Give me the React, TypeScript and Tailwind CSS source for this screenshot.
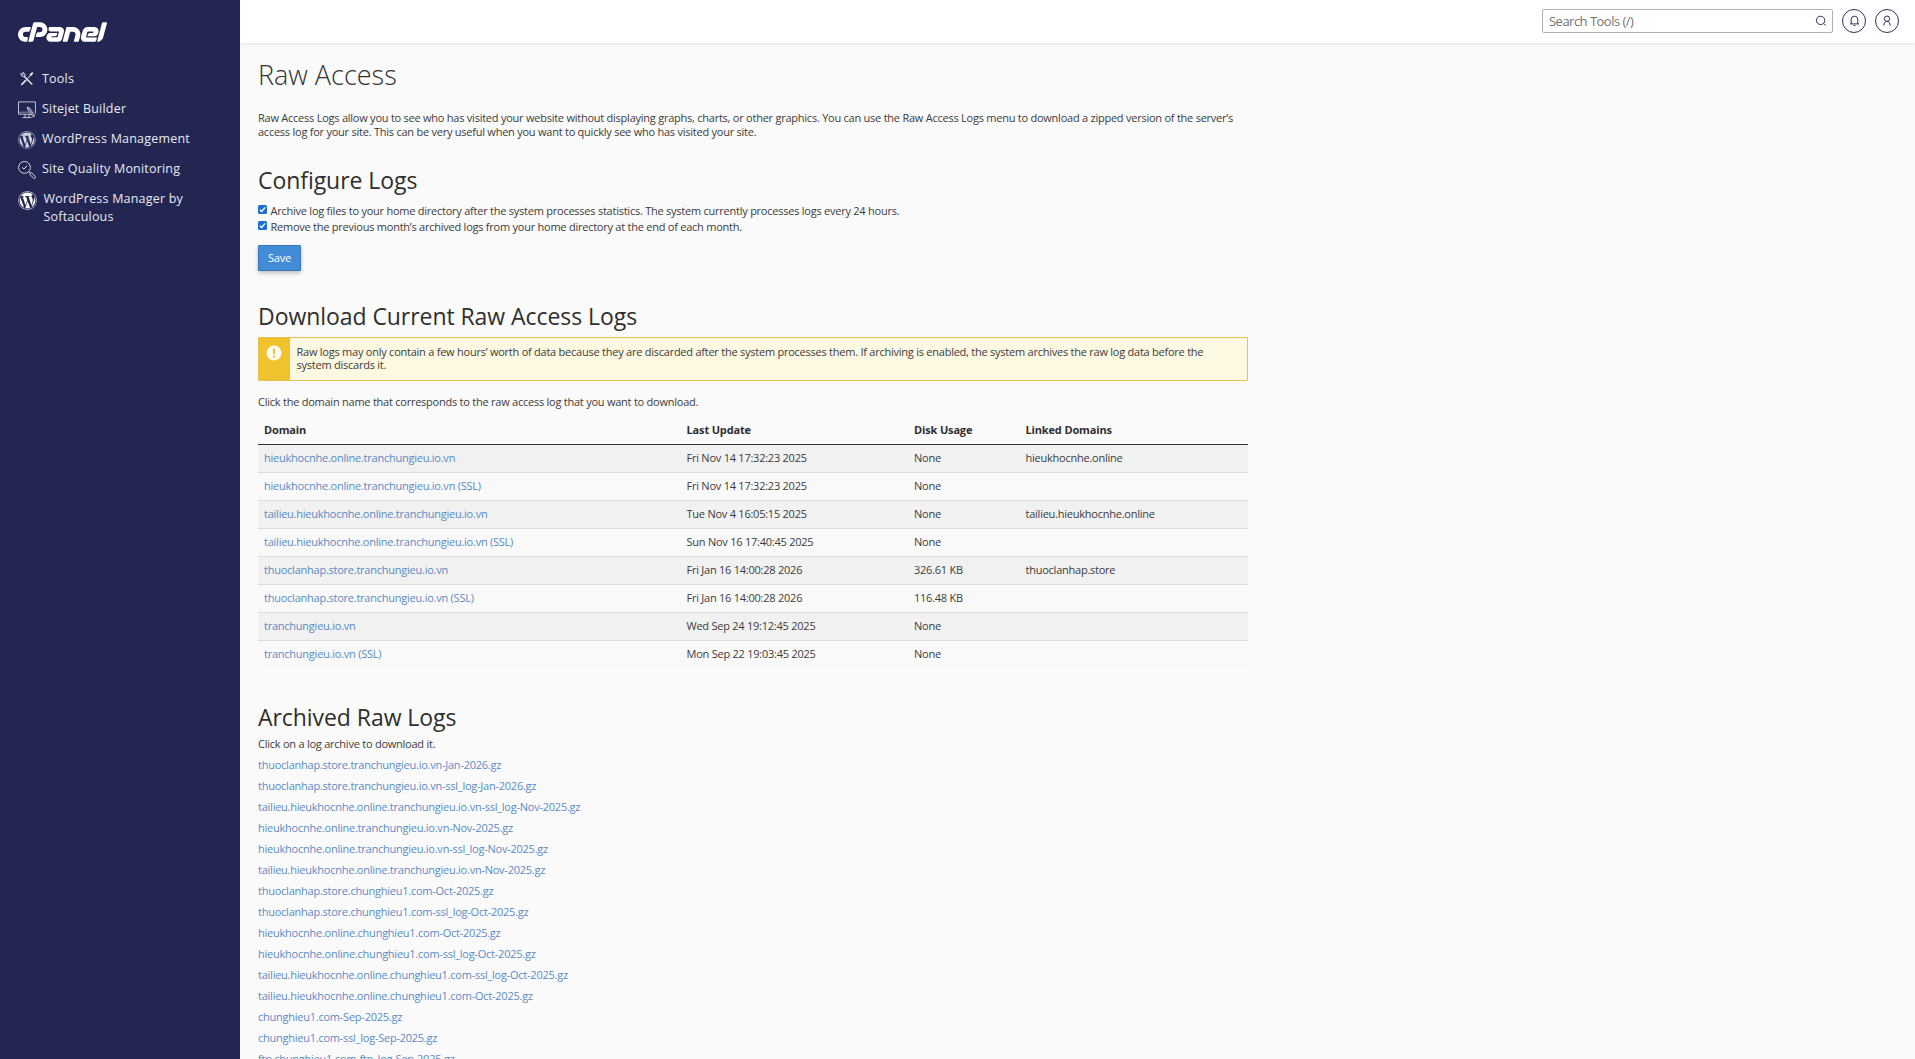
import React from 'react'
import { SiCpanel } from 'react-icons/si'
import { FaWordpress } from 'react-icons/fa'

// ─── Data ─────────────────────────────────────────────────────────────
const rows = [
  { domain: 'hieukhocnhe.online.tranchungieu.io.vn', update: 'Fri Nov 14 17:32:23 2025', usage: 'None', linked: 'hieukhocnhe.online' },
  { domain: 'hieukhocnhe.online.tranchungieu.io.vn (SSL)', update: 'Fri Nov 14 17:32:23 2025', usage: 'None', linked: '' },
  { domain: 'tailieu.hieukhocnhe.online.tranchungieu.io.vn', update: 'Tue Nov 4 16:05:15 2025', usage: 'None', linked: 'tailieu.hieukhocnhe.online' },
  { domain: 'tailieu.hieukhocnhe.online.tranchungieu.io.vn (SSL)', update: 'Sun Nov 16 17:40:45 2025', usage: 'None', linked: '' },
  { domain: 'thuoclanhap.store.tranchungieu.io.vn', update: 'Fri Jan 16 14:00:28 2026', usage: '326.61 KB', linked: 'thuoclanhap.store' },
  { domain: 'thuoclanhap.store.tranchungieu.io.vn (SSL)', update: 'Fri Jan 16 14:00:28 2026', usage: '116.48 KB', linked: '' },
  { domain: 'tranchungieu.io.vn', update: 'Wed Sep 24 19:12:45 2025', usage: 'None', linked: '' },
  { domain: 'tranchungieu.io.vn (SSL)', update: 'Mon Sep 22 19:03:45 2025', usage: 'None', linked: '' },
]

const archives = [
  'thuoclanhap.store.tranchungieu.io.vn-Jan-2026.gz',
  'thuoclanhap.store.tranchungieu.io.vn-ssl_log-Jan-2026.gz',
  'tailieu.hieukhocnhe.online.tranchungieu.io.vn-ssl_log-Nov-2025.gz',
  'hieukhocnhe.online.tranchungieu.io.vn-Nov-2025.gz',
  'hieukhocnhe.online.tranchungieu.io.vn-ssl_log-Nov-2025.gz',
  'tailieu.hieukhocnhe.online.tranchungieu.io.vn-Nov-2025.gz',
  'thuoclanhap.store.chunghieu1.com-Oct-2025.gz',
  'thuoclanhap.store.chunghieu1.com-ssl_log-Oct-2025.gz',
  'hieukhocnhe.online.chunghieu1.com-Oct-2025.gz',
  'hieukhocnhe.online.chunghieu1.com-ssl_log-Oct-2025.gz',
  'tailieu.hieukhocnhe.online.chunghieu1.com-ssl_log-Oct-2025.gz',
  'tailieu.hieukhocnhe.online.chunghieu1.com-Oct-2025.gz',
  'chunghieu1.com-Sep-2025.gz',
  'chunghieu1.com-ssl_log-Sep-2025.gz',
  'ftp.chunghieu1.com-ftp_log-Sep-2025.gz',
]

// ─── Icons ────────────────────────────────────────────────────────────
function ToolsIcon() {
  return (
    <svg width="18" height="18" viewBox="0 1 18 18" fill="none" stroke="currentColor" strokeLinecap="round">
      <path d="M6.4 6.4 L13.8 14" strokeWidth="1.5" />
      <path d="M3.2 3.4 L4.6 4.8 L5.6 4 L4.6 2.6 A2.3 2.3 0 0 1 6.6 6.2 A2.4 2.4 0 0 1 3 3.6" strokeWidth="0.9" />
      <path d="M9.8 8.4 L14 4" strokeWidth="1" />
      <path d="M12.6 5 L14.3 3.2" strokeWidth="1.9" />
      <path d="M7.8 10.4 L3.8 14.4" strokeWidth="1.6" />
    </svg>
  )
}

function SitejetIcon() {
  return (
    <svg width="18" height="18" viewBox="0 0 18 18" fill="none" stroke="currentColor" strokeWidth="0.8">
      <path d="M13.5 13.2 H0.5 V0.9 H17.4 V12.5" />
      <path d="M0.6 11.2 H11" strokeWidth="0.5" />
      <path d="M7 13.2 V16.4 M11 13.2 V16.4 M4.4 16.6 H13.6" />
      <path d="M9.2 6.2 L11.6 7 L16.9 14.8 L15.2 16.2 L9.8 8.6 Z" />
      <path d="M11.6 7 L9.8 8.6 M10.8 8 L15.9 15.2" strokeWidth="0.6" />
    </svg>
  )
}

function QualityIcon() {
  return (
    <svg width="18" height="18" viewBox="0 0 18 18" fill="none" stroke="currentColor" strokeWidth="0.9">
      <circle cx="6.5" cy="6.4" r="5.9" />
      <path d="M4 6.4 L5.9 8 L9.2 4.7" strokeWidth="1" />
      <path d="M10.7 10.6 L12.2 12.1" />
      <path d="M11.4 13 L13.1 11.4 L17.2 15.4 A1.2 1.2 0 0 1 15.5 17.1 Z" />
    </svg>
  )
}

function NavItem({ icon, children }: { icon: React.ReactNode; children: React.ReactNode }) {
  return (
    <a className="flex min-h-[30px] items-start">
      <span className="mt-px mr-1.5 h-[18px] w-[18px] shrink-0">{icon}</span>
      <span>{children}</span>
    </a>
  )
}

function Check({ label }: { label: string }) {
  return (
    <label className="flex h-4 items-start">
      <span className="mt-[2px] mr-[3.5px] flex h-[9px] w-[9px] items-center justify-center rounded-[1.5px] bg-[#1a6fd0]">
        <svg width="9" height="9" viewBox="0 0 9 9" fill="none" stroke="#fff" strokeWidth="1.4">
          <path d="M1.8 4.7 L3.6 6.5 L7.3 2.4" />
        </svg>
      </span>
      {label}
    </label>
  )
}

export default function App() {
  return (
    <div className="flex h-[1059px] w-[1915px] overflow-hidden bg-[#fafafa] font-['Open_Sans',sans-serif]">
      {/* ─── Sidebar ─────────────────────────────────────────────── */}
      <aside className="w-[240px] shrink-0 bg-[#232653] pl-[18px] text-[12.5px] leading-[18px] tracking-[0.2px] text-[#e8e9f2]">
        <SiCpanel viewBox="0 9.38 24 5.24" className="mt-[22px] h-[20px] w-[89px] text-white" />
        <nav className="mt-[28px]">
          <NavItem icon={<ToolsIcon />}>Tools</NavItem>
          <NavItem icon={<SitejetIcon />}>Sitejet Builder</NavItem>
          <NavItem icon={<FaWordpress size={18} className="text-[#d3d4e3]" />}>WordPress Management</NavItem>
          <NavItem icon={<QualityIcon />}>Site Quality Monitoring</NavItem>
          <NavItem icon={<FaWordpress size={19} className="text-white" />}>
            <span className="ml-[1.5px] block">WordPress Manager by<br />Softaculous</span>
          </NavItem>
        </nav>
      </aside>

      <div className="flex-1">
        {/* ─── Top bar ───────────────────────────────────────────── */}
        <header className="flex h-[43px] items-start justify-end bg-white pt-[9px] pr-4 shadow-[0_1px_4px_rgba(0,0,0,0.1)]">
          <div className="flex h-6 w-[291px] items-center justify-between rounded-[2px] border border-[#b0b0bb] pr-[5px] pl-1.5 text-[13px] tracking-[-0.52px] text-[#757575]">
            <span className="pt-px">Search Tools (/)</span>
            <svg width="12" height="12" viewBox="0 0 12 12" fill="none" stroke="#2f3450" strokeWidth="1">
              <circle cx="5.6" cy="5.4" r="4.2" />
              <path d="M8.6 8.4 L10.8 10.6" />
            </svg>
          </div>
          <div className="ml-[9px] flex h-6 w-6 items-center justify-center rounded-full border border-[#2f3060]">
            <svg width="11" height="12" viewBox="0 0 11 12" fill="none" stroke="#2f3060" strokeWidth="1">
              <path d="M1 8.9 H10 M2.2 8.9 V4.4 A3.3 3.3 0 0 1 8.8 4.4 V8.9 M4.5 10.6 H6.5" />
            </svg>
          </div>
          <div className="ml-[9px] flex h-6 w-6 items-center justify-center rounded-full border border-[#2f3060]">
            <svg width="10" height="12" viewBox="0 0 10 12" fill="none" stroke="#2f3060" strokeWidth="1">
              <circle cx="5" cy="3.7" r="2.7" />
              <path d="M1.8 10.6 C1.8 8 3.1 6.4 5 6.4 C6.9 6.4 8.2 8 8.2 10.6" />
            </svg>
          </div>
        </header>

        {/* ─── Content ───────────────────────────────────────────── */}
        <main className="w-[1008px] pt-[15px] pl-[18px] text-[11px] leading-[14px] tracking-[-0.24px] whitespace-nowrap text-[#3c3c3c]">
          <h1 className="h-[33px] text-[27px] leading-[33px] font-light tracking-normal text-[#333]">Raw Access</h1>
          <p className="mt-5">
            Raw Access Logs allow you to see who has visited your website without displaying graphs, charts, or other graphics. You can use the Raw Access Logs menu to download a zipped version of the server’s<br />
            access log for your site. This can be very useful when you want to quickly see who has visited your site.
          </p>

          <h2 className="mt-[26px] h-[30px] text-[23px] leading-[30px] tracking-[-0.06px] text-[#2f2f2f]">Configure Logs</h2>
          <div className="mt-[8px] leading-[16px]">
            <Check label="Archive log files to your home directory after the system processes statistics. The system currently processes logs every 24 hours." />
            <Check label="Remove the previous month’s archived logs from your home directory at the end of each month." />
          </div>
          <button className="mt-[10px] flex h-[26px] w-[43px] items-center justify-center rounded-[1px] border border-[#3a75b8] bg-[#428bd6] text-white shadow-[0_2px_4px_rgba(0,0,0,0.25)]">
            Save
          </button>

          <h2 className="mt-[30px] h-[30px] text-[23px] leading-[30px] tracking-[-0.06px] text-[#2f2f2f]">Download Current Raw Access Logs</h2>
          <div className="mt-[6px] flex h-[44px] rounded-[1px] border border-[#e5c04c] bg-[#fcf8e1]">
            <div className="w-[31px] shrink-0 bg-[#f0c22e] pt-[7px] pl-[7px]">
              <svg width="16" height="16" viewBox="0 0 16 16">
                <circle cx="8" cy="8" r="7.5" fill="#fffdf0" />
                <path d="M6.8 3.4 H9.2 L8.9 9.2 H7.1 Z M6.9 10.4 H9.1 V12.4 H6.9 Z" fill="#f0c22e" />
              </svg>
            </div>
            <p className="pt-[7px] pl-[6.5px] leading-[13px]">
              Raw logs may only contain a few hours’ worth of data because they are discarded after the system processes them. If archiving is enabled, the system archives the raw log data before the<br />
              system discards it.
            </p>
          </div>

          <p className="mt-[14px]">Click the domain name that corresponds to the raw access log that you want to download.</p>

          <table className="mt-[7px] w-[990px] table-fixed border-collapse text-left">
            <thead>
              <tr className="h-[28px] border-b border-[#333] tracking-[-0.15px] text-[#2f2f2f]">
                <th className="w-[422px] pl-1.5 font-bold">Domain</th>
                <th className="w-[228px] pl-[6.5px] font-bold">Last Update</th>
                <th className="w-[111px] pl-1.5 font-bold">Disk Usage</th>
                <th className="pl-[6.5px] font-bold">Linked Domains</th>
              </tr>
            </thead>
            <tbody>
              {rows.map((row) => (
                <tr key={row.domain} className="h-[28px] border-b border-[#ddd] odd:bg-[#f1f1f1] even:bg-[#f9f9f9] last:border-0">
                  <td className="pl-1.5 text-[#5a8ac6]">{row.domain}</td>
                  <td className="pl-[6.5px]">{row.update}</td>
                  <td className="pl-1.5">{row.usage}</td>
                  <td className="pl-[6.5px]">{row.linked}</td>
                </tr>
              ))}
            </tbody>
          </table>

          <h2 className="mt-[34px] h-[30px] text-[23px] leading-[30px] tracking-[-0.06px] text-[#2f2f2f]">Archived Raw Logs</h2>
          <p className="mt-[5px]">Click on a log archive to download it.</p>
          <ul className="mt-[3px] leading-[21px] text-[#5a8ac6]">
            {archives.map((name) => (
              <li key={name}>{name}</li>
            ))}
          </ul>
        </main>
      </div>
    </div>
  )
}
